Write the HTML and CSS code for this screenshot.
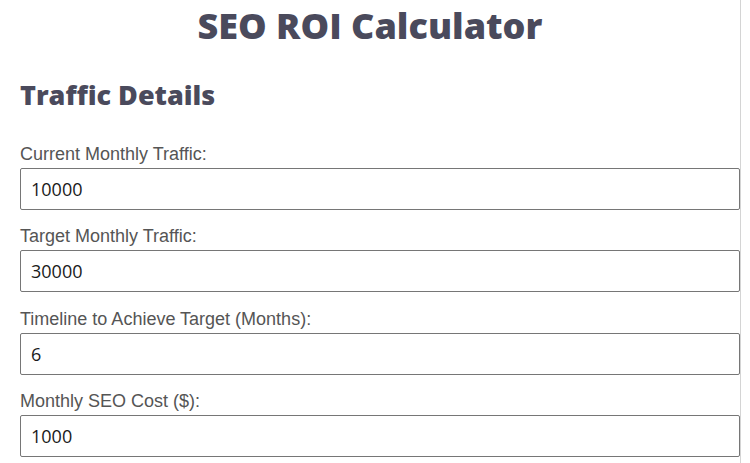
FILE: index.html
```html
<!DOCTYPE html>
<html lang="en">
<head>
    <meta charset="UTF-8">
    <meta name="viewport" content="width=device-width, initial-scale=1.0">
    <title>SEO ROI Calculator</title>
    <link rel="stylesheet" href="styles.css">
</head>
<body>
    <div class="page">
        <h1 class="title">SEO ROI Calculator</h1>

        <div class="section">
            <h2 class="section_title">Traffic Details</h2>

            <div class="field">
                <label for="current_traffic">Current Monthly Traffic:</label>
                <input type="number" id="current_traffic" value="10000">
            </div>
            <div class="field">
                <label for="target_traffic">Target Monthly Traffic:</label>
                <input type="number" id="target_traffic" value="30000">
            </div>
            <div class="field">
                <label for="timeline">Timeline to Achieve Target (Months):</label>
                <input type="number" id="timeline" value="6">
            </div>
            <div class="field">
                <label for="seo_cost">Monthly SEO Cost ($):</label>
                <input type="number" id="seo_cost" value="1000">
            </div>
        </div>
    </div>
</body>
</html>
```

FILE: styles.css
```css
body{
    margin: 0px;
    padding: 0px;
    background: #ffffff;
}

.page{
    width: 741px;
    min-height: 463px;
    box-sizing: border-box;
    border-right: 1px solid #d4d4d4;
}

.title{
    margin: 0px;
    padding-top: 1px;
    height: 55px;
    text-align: center;
    font-family: "Open Sans", "Noto Sans", sans-serif;
    font-weight: 800;
    font-size: 36px;
    color: #4a4a5c;
}

.section{
    padding-left: 20px;
}

.section_title{
    margin: 20px 0px 0px 0px;
    height: 51px;
    font-family: "Open Sans", "Noto Sans", sans-serif;
    font-weight: 800;
    font-size: 27px;
    color: #4a4a5c;
}

.field{
    display: flex;
    flex-direction: column;
    gap: 3px;
    margin-top: 15.5px;
}

.field label{
    font-family: "Liberation Sans", Arial, sans-serif;
    font-size: 18px;
    line-height: 22px;
    color: #555555;
}

.field input{
    height: 42px;
    box-sizing: border-box;
    margin: 0px;
    padding: 0px 10px;
    border: 1px solid #767676;
    border-radius: 2px;
    font-family: "Open Sans", "Noto Sans", sans-serif;
    font-size: 18px;
    color: #1a1a1a;
    -moz-appearance: textfield;
}

.field input::-webkit-outer-spin-button,
.field input::-webkit-inner-spin-button{
    -webkit-appearance: none;
    margin: 0px;
}
```
